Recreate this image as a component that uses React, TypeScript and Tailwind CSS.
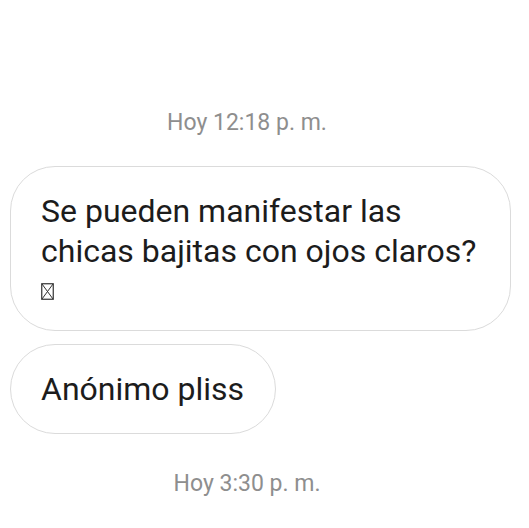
import React from "react";

function Tofu() {
  return (
    <svg width="13" height="17" viewBox="0 0 13 17" className="inline-block align-baseline">
      <rect x="0.75" y="0.75" width="11.5" height="15.5" fill="none" stroke="#333" strokeWidth="1.2" />
      <path d="M1 1 L12 16 M12 1 L1 16" stroke="#333" strokeWidth="1" fill="none" />
    </svg>
  );
}

export default function App() {
  return (
    <div
      className="w-[529px] h-[528px] bg-white overflow-hidden flex flex-col"
      style={{ fontFamily: "Roboto, 'Liberation Sans', sans-serif" }}
    >
      <div className="h-[109px]" />
      <div className="pr-[35px] text-center text-[23px] leading-[28px] text-[#8e8e8e]">Hoy 12:18 p. m.</div>
      <div className="h-[29px]" />
      <div className="pl-[10px] pr-[18px]">
        <div className="border-[1.5px] border-[#dbdbdb] rounded-[45px] pl-[30px] pr-[10px] pt-[24px] pb-[19px] text-[32px] leading-[40px] text-[#1c1c1c]">
          <div>Se pueden manifestar las</div>
          <div className="whitespace-nowrap">chicas bajitas con ojos claros?</div>
          <div className="h-[40px] flex items-center">
            <Tofu />
          </div>
        </div>
      </div>
      <div className="h-[13px]" />
      <div className="pl-[10px] flex">
        <div className="border-[1.5px] border-[#dbdbdb] rounded-[45px] h-[90px] w-[266px] pl-[30px] flex items-center text-[32px] leading-[40px] text-[#1c1c1c]">
          Anónimo pliss
        </div>
      </div>
      <div className="h-[36px]" />
      <div className="pr-[35px] text-center text-[23px] leading-[28px] text-[#8e8e8e]">Hoy 3:30 p. m.</div>
    </div>
  );
}
